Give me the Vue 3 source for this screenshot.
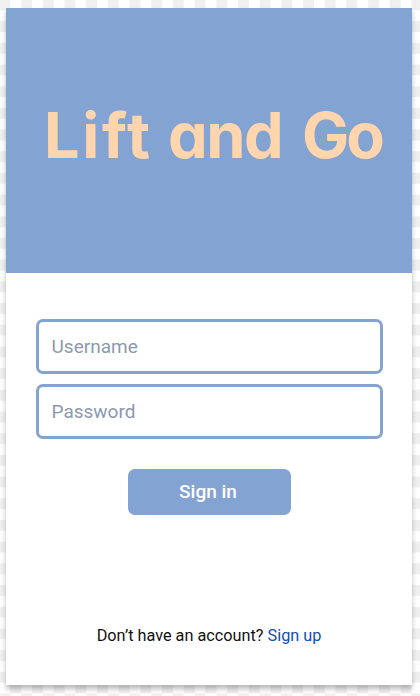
<script setup>
import { ref } from 'vue'

const username = ref('')
const password = ref('')
</script>

<template>
  <div class="canvas">
    <main class="card">
      <header class="hero">
        <h1 class="title">
          <span class="word lift">Lift</span>
          <span class="word and">and</span>
          <span class="word go">Go</span>
        </h1>
      </header>
      <form class="form" @submit.prevent>
        <input v-model="username" class="field" type="text" placeholder="Username" />
        <input v-model="password" class="field" type="password" placeholder="Password" />
        <button class="submit" type="submit">Sign in</button>
      </form>
      <p class="signup">Don’t have an account? <a class="link">Sign up</a></p>
    </main>
  </div>
</template>

<style>
body {
  margin: 0;
  overflow: hidden;
}
</style>

<style scoped>
.canvas {
  box-sizing: border-box;
  width: 420px;
  height: 696px;
  padding: 8px 8px 11px 6px;
  background: repeating-conic-gradient(#fff 0 25%, #f0f0f0 0 50%) 10.3px 10.3px / 21.7px 21.7px;
  font-family: Roboto, sans-serif;
}
.card {
  display: flex;
  flex-direction: column;
  align-items: center;
  width: 406px;
  height: 677px;
  background: #fff;
  box-shadow: 0 4px 5px rgba(0, 0, 0, 0.27);
}
.hero {
  box-sizing: border-box;
  width: 100%;
  height: 265px;
  padding: 89px 0 0 38px;
  background: #83a3d3;
}
.title {
  display: flex;
  margin: 0;
  color: #ffd5ad;
  font: 700 63px/77px Inter, sans-serif;
  font-feature-settings: 'cv11' 1, 'liga' 0;
  white-space: nowrap;
}
.word {
  flex: none;
}
.lift {
  width: 124px;
  letter-spacing: 2.6px;
}
.and {
  width: 134px;
  letter-spacing: -1.5px;
}
.go {
  letter-spacing: -3px;
}
.form {
  display: flex;
  flex-direction: column;
  align-items: center;
  margin-top: 46px;
}
.field {
  box-sizing: border-box;
  width: 347px;
  height: 55px;
  margin: 0 0 10px;
  padding: 0 13px;
  border: 3px solid #83a3d3;
  border-radius: 7px;
  outline: none;
  background: #fff;
  font: 400 19px/24px Roboto, sans-serif;
}
.field::placeholder {
  color: #8c98b0;
  opacity: 1;
}
.submit {
  width: 163px;
  height: 46px;
  margin: 20px 0 0;
  padding: 0 2px 0 0;
  border: 0;
  border-radius: 7px;
  background: #83a3d3;
  color: #fff;
  font: 500 19px/24px Roboto, sans-serif;
}
.signup {
  margin: 111px 0 0;
  color: #111;
  font-size: 16.25px;
  line-height: 20px;
}
.link {
  color: #0f4db5;
}
</style>
